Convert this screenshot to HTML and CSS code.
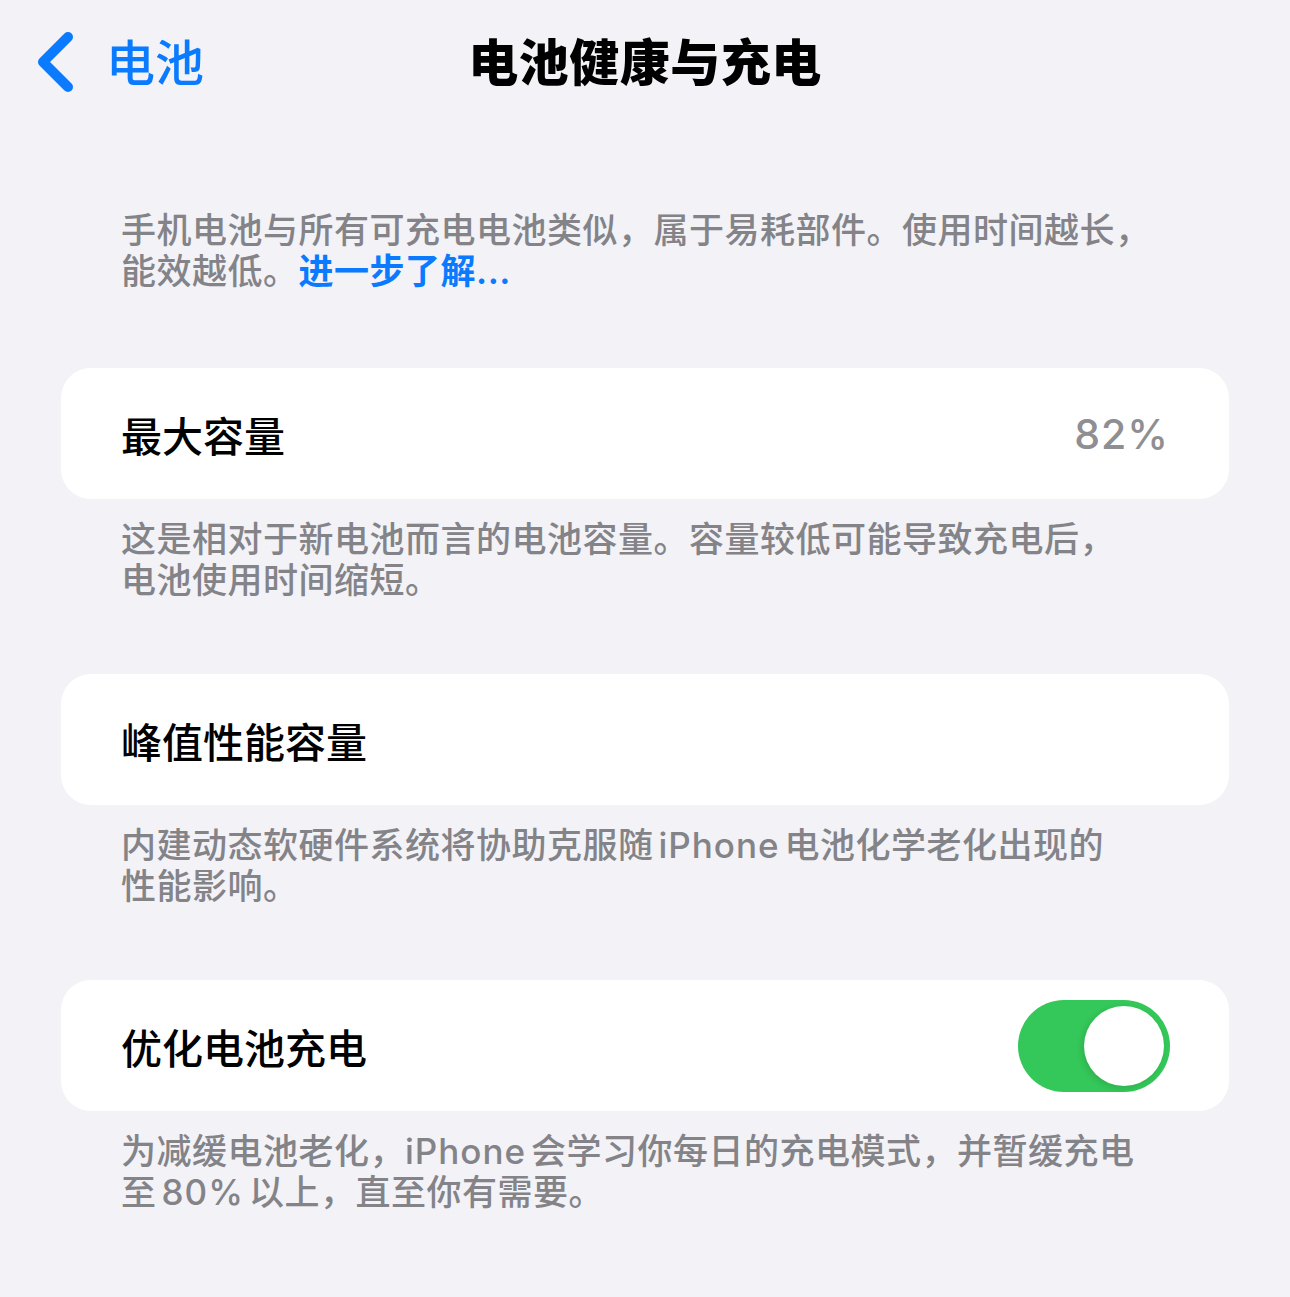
FILE: index.html
```html
<!DOCTYPE html>
<html lang="zh-CN">
<head>
  <meta charset="UTF-8" />
  <meta name="viewport" content="width=device-width, initial-scale=1.0"/>
  <title>电池健康与充电</title>
  <link rel="stylesheet" href="styles.css">
</head>
<body>

  <header class="nav">
    <a class="back" href="#">
      <svg class="chevron" width="40" height="62" viewBox="0 0 40 62">
        <polyline points="32,6 7,31 32,56" fill="none" stroke="#0a7aff" stroke-width="10" stroke-linecap="round" stroke-linejoin="round"/>
      </svg>
      <span>电池</span>
    </a>
    <h1>电池健康与充电</h1>
    <div></div>
  </header>

  <main>
    <p class="nota intro">
      手机电池与所有可充电电池类似，属于易耗部件。使用时间越长，<br>
      能效越低。<a href="#" class="mas">进一步了解...</a>
    </p>

    <section class="grupo">
      <div class="fila">
        <span class="etiqueta">最大容量</span>
        <span class="valor">82%</span>
      </div>
    </section>
    <p class="nota">
      这是相对于新电池而言的电池容量。容量较低可能导致充电后，<br>
      电池使用时间缩短。
    </p>

    <section class="grupo">
      <div class="fila">
        <span class="etiqueta">峰值性能容量</span>
      </div>
    </section>
    <p class="nota">
      内建动态软硬件系统将协助克服随<span class="lat">iPhone</span>电池化学老化出现的<br>
      性能影响。
    </p>

    <section class="grupo">
      <div class="fila">
        <span class="etiqueta">优化电池充电</span>
        <label class="switch">
          <input type="checkbox" checked>
          <span class="pista"></span>
        </label>
      </div>
    </section>
    <p class="nota">
      为减缓电池老化，<span class="lat pegado">iPhone</span>会学习你每日的充电模式，并暂缓充电<br>
      至<span class="lat">80%</span>以上，直至你有需要。
    </p>
  </main>

</body>
</html>
```

FILE: styles.css
```css
body {
  margin: 0; padding: 0;
  font-family: "Inter", "Noto Sans CJK SC", sans-serif;
  background: #f2f2f7; color: #000;
}

.nav {
  height: 118px;
  padding-bottom: 8px;
  display: grid;
  grid-template-columns: 1fr auto 1fr;
  align-items: center;
}

.back {
  display: flex;
  align-items: center;
  gap: 30px;
  padding-left: 36px;
  color: #0a7aff;
  text-decoration: none;
  font-size: 49px;
  font-weight: 500;
}

.chevron { display: block; margin-top: 6px; }

.nav h1 {
  margin: 0;
  font-size: 50px;
  font-weight: 800;
  letter-spacing: 0.5px;
}

main {
  padding: 0 61px 40px;
}

.nota {
  margin: 20px 60px 73px;
  color: #838388;
  font-size: 35px;
  font-weight: 500;
  line-height: 41px;
  letter-spacing: 0.5px;
}

.nota .lat {
  margin: 0 5px;
  letter-spacing: 1px;
}

/* after a full-width comma no extra gap is needed */
.nota .lat.pegado { margin-left: 0; }

.nota.intro {
  margin-top: 84px;
  margin-bottom: 76px;
}

.mas {
  color: #0a7aff;
  text-decoration: none;
  font-weight: 600;
}

.grupo {
  background: #fff;
  border-radius: 30px;
}

.fila {
  height: 131px;
  padding: 0 60px;
  display: flex;
  align-items: center;
  justify-content: space-between;
}

.etiqueta {
  font-size: 41px;
  font-weight: 500;
}

.valor {
  color: #8e8e93;
  font-size: 41px;
  font-weight: 500;
  letter-spacing: 1px;
}

.switch {
  position: relative;
  width: 152px;
  height: 92px;
  margin-right: -1px;
}

.switch input { display: none; }

.pista {
  position: absolute;
  inset: 0;
  background: #34c759;
  border-radius: 46px;
}

.pista::after {
  content: "";
  position: absolute;
  top: 6px; right: 6px;
  width: 80px; height: 80px;
  border-radius: 50%;
  background: #fff;
  box-shadow: -2px 2px 6px rgba(0,0,0,0.12);
}
```
